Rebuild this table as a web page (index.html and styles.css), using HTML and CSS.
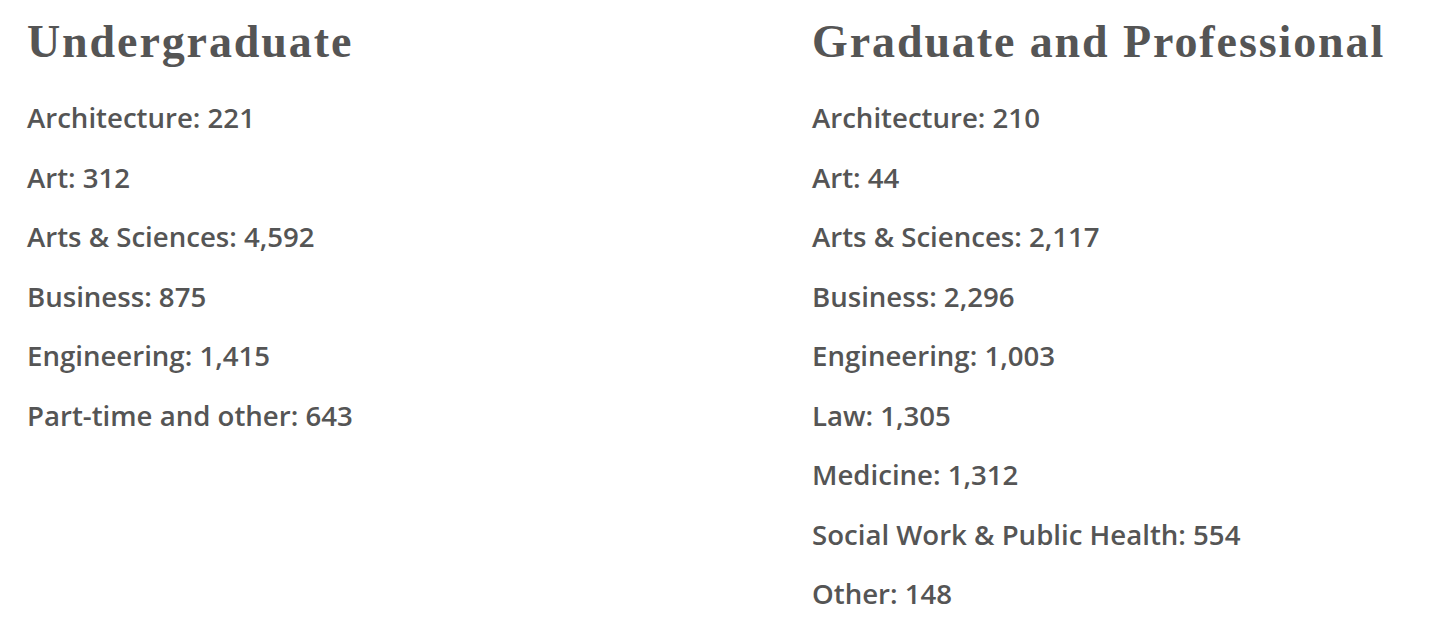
FILE: index.html
```html
<!DOCTYPE html>
<html lang="en">
<head>
<meta charset="utf-8">
<title>Enrollment by School</title>
<link rel="stylesheet" href="styles.css">
</head>
<body>
<main class="enrollment">
  <section class="group">
    <h2 class="group-title">Undergraduate</h2>
    <ul class="stats">
      <li>Architecture: 221</li>
      <li>Art: 312</li>
      <li>Arts &amp; Sciences: 4,592</li>
      <li>Business: 875</li>
      <li>Engineering: 1,415</li>
      <li>Part-time and other: 643</li>
    </ul>
  </section>
  <section class="group">
    <h2 class="group-title">Graduate and Professional</h2>
    <ul class="stats">
      <li>Architecture: 210</li>
      <li>Art: 44</li>
      <li>Arts &amp; Sciences: 2,117</li>
      <li>Business: 2,296</li>
      <li>Engineering: 1,003</li>
      <li>Law: 1,305</li>
      <li>Medicine: 1,312</li>
      <li>Social Work &amp; Public Health: 554</li>
      <li>Other: 148</li>
    </ul>
  </section>
</main>
</body>
</html>
```
FILE: styles.css
```css
html, body {
  margin: 0;
  padding: 0;
  background: #ffffff;
}

body {
  color: #555555;
  font-family: "Open Sans", "Noto Sans", sans-serif;
}

.enrollment {
  display: grid;
  grid-template-columns: 785px 1fr;
  padding: 15px 0 0 27px;
}

.group-title {
  margin: 0;
  font-family: "Liberation Serif", "Times New Roman", serif;
  font-weight: 700;
  font-size: 46px;
  line-height: 54px;
  letter-spacing: 1.9px;
  color: #555555;
}

.stats {
  list-style: none;
  margin: 19px 0 0;
  padding: 0;
}

.stats li {
  font-size: 27.6px;
  font-weight: 600;
  line-height: 59.5px;
  white-space: nowrap;
}
```
